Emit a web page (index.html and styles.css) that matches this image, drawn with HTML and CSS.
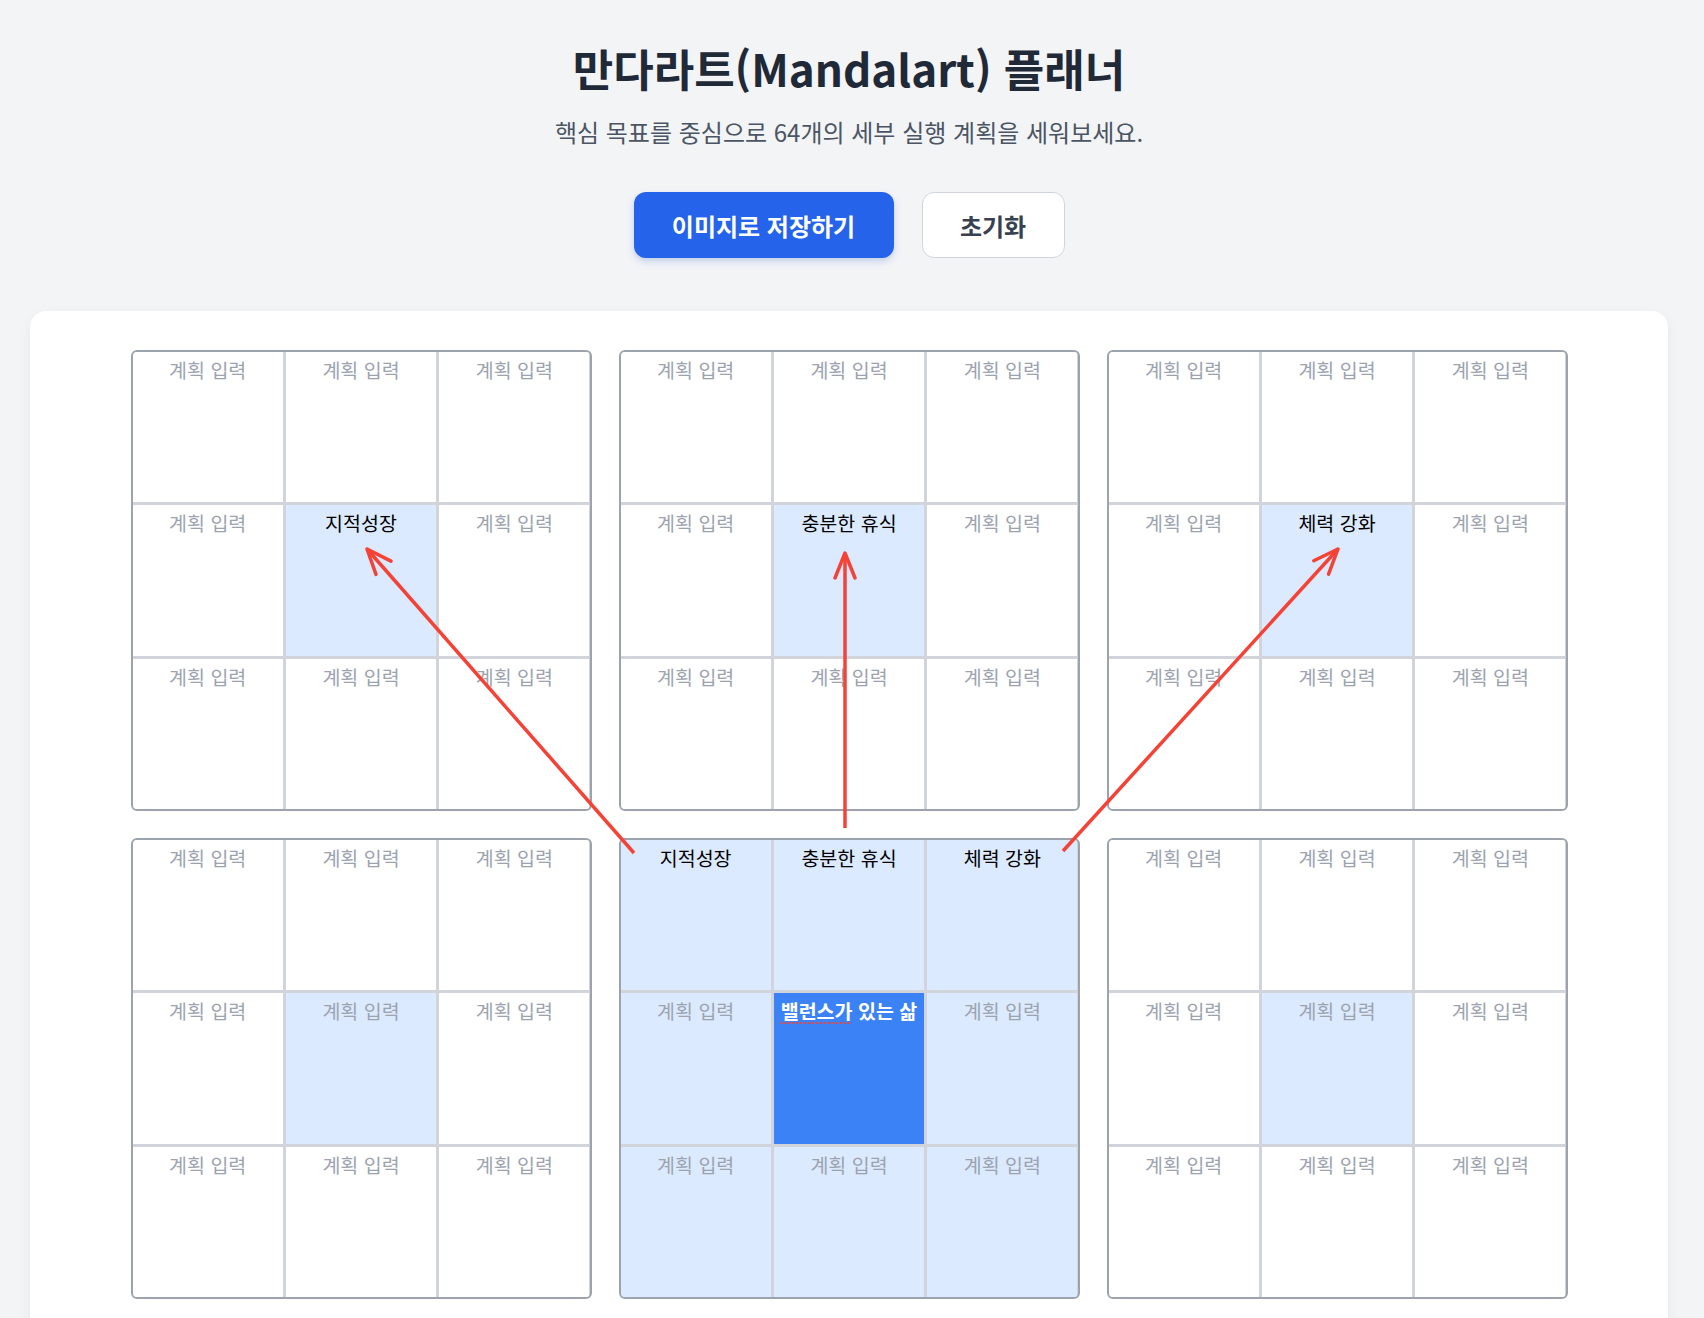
FILE: index.html
```html
<!DOCTYPE html>
<html lang="ko">
<head>
<meta charset="utf-8">
<title>만다라트(Mandalart) 플래너</title>
<link rel="stylesheet" href="styles.css">
</head>
<body>
<main class="page">
  <header class="header">
    <h1 class="title">만다라트(Mandalart) 플래너</h1>
    <p class="subtitle">핵심 목표를 중심으로 64개의 세부 실행 계획을 세워보세요.</p>
    <div class="actions">
      <button class="btn btn-primary" type="button">이미지로 저장하기</button>
      <button class="btn btn-secondary" type="button">초기화</button>
    </div>
  </header>

  <section class="card">
    <div class="board">
      <!-- Row 1 -->
      <div class="block">
        <div class="cell">계획 입력</div><div class="cell">계획 입력</div><div class="cell">계획 입력</div>
        <div class="cell">계획 입력</div><div class="cell cell-goal filled">지적성장</div><div class="cell">계획 입력</div>
        <div class="cell">계획 입력</div><div class="cell">계획 입력</div><div class="cell">계획 입력</div>
      </div>
      <div class="block">
        <div class="cell">계획 입력</div><div class="cell">계획 입력</div><div class="cell">계획 입력</div>
        <div class="cell">계획 입력</div><div class="cell cell-goal filled">충분한 휴식</div><div class="cell">계획 입력</div>
        <div class="cell">계획 입력</div><div class="cell">계획 입력</div><div class="cell">계획 입력</div>
      </div>
      <div class="block">
        <div class="cell">계획 입력</div><div class="cell">계획 입력</div><div class="cell">계획 입력</div>
        <div class="cell">계획 입력</div><div class="cell cell-goal filled">체력 강화</div><div class="cell">계획 입력</div>
        <div class="cell">계획 입력</div><div class="cell">계획 입력</div><div class="cell">계획 입력</div>
      </div>

      <!-- Row 2 -->
      <div class="block">
        <div class="cell">계획 입력</div><div class="cell">계획 입력</div><div class="cell">계획 입력</div>
        <div class="cell">계획 입력</div><div class="cell cell-goal">계획 입력</div><div class="cell">계획 입력</div>
        <div class="cell">계획 입력</div><div class="cell">계획 입력</div><div class="cell">계획 입력</div>
      </div>
      <div class="block block-center">
        <div class="cell cell-goal filled">지적성장</div><div class="cell cell-goal filled">충분한 휴식</div><div class="cell cell-goal filled">체력 강화</div>
        <div class="cell cell-goal">계획 입력</div><div class="cell cell-core"><span class="typo">밸런스가</span> 있는 삶</div><div class="cell cell-goal">계획 입력</div>
        <div class="cell cell-goal">계획 입력</div><div class="cell cell-goal">계획 입력</div><div class="cell cell-goal">계획 입력</div>
      </div>
      <div class="block">
        <div class="cell">계획 입력</div><div class="cell">계획 입력</div><div class="cell">계획 입력</div>
        <div class="cell">계획 입력</div><div class="cell cell-goal">계획 입력</div><div class="cell">계획 입력</div>
        <div class="cell">계획 입력</div><div class="cell">계획 입력</div><div class="cell">계획 입력</div>
      </div>

      <!-- Row 3 -->
      <div class="block">
        <div class="cell">계획 입력</div><div class="cell">계획 입력</div><div class="cell">계획 입력</div>
        <div class="cell">계획 입력</div><div class="cell cell-goal">계획 입력</div><div class="cell">계획 입력</div>
        <div class="cell">계획 입력</div><div class="cell">계획 입력</div><div class="cell">계획 입력</div>
      </div>
      <div class="block">
        <div class="cell">계획 입력</div><div class="cell">계획 입력</div><div class="cell">계획 입력</div>
        <div class="cell">계획 입력</div><div class="cell cell-goal">계획 입력</div><div class="cell">계획 입력</div>
        <div class="cell">계획 입력</div><div class="cell">계획 입력</div><div class="cell">계획 입력</div>
      </div>
      <div class="block">
        <div class="cell">계획 입력</div><div class="cell">계획 입력</div><div class="cell">계획 입력</div>
        <div class="cell">계획 입력</div><div class="cell cell-goal">계획 입력</div><div class="cell">계획 입력</div>
        <div class="cell">계획 입력</div><div class="cell">계획 입력</div><div class="cell">계획 입력</div>
      </div>

      <svg class="arrows" viewBox="0 0 1437 1437" width="1437" height="1437" aria-hidden="true">
        <defs>
          <marker id="head" viewBox="0 0 30 24" markerWidth="30" markerHeight="24" refX="27" refY="12" markerUnits="userSpaceOnUse" orient="auto">
            <path d="M2 2 L27 12 L2 22" fill="none" stroke="#f44336" stroke-width="3.5" stroke-linecap="round" stroke-linejoin="round"/>
          </marker>
        </defs>
        <line x1="503" y1="503" x2="236" y2="199" stroke="#f44336" stroke-width="3.5" marker-end="url(#head)"/>
        <line x1="714" y1="478" x2="714" y2="203" stroke="#f44336" stroke-width="3.5" marker-end="url(#head)"/>
        <line x1="932" y1="501" x2="1207" y2="199" stroke="#f44336" stroke-width="3.5" marker-end="url(#head)"/>
      </svg>
    </div>
  </section>
</main>
</body>
</html>
```

FILE: styles.css
```css
* {
  box-sizing: border-box;
}

body {
  margin: 0;
  background: #f3f4f6;
  font-family: "Noto Sans CJK KR", "Noto Sans", sans-serif;
  color: #1f2937;
}

.page {
  width: 1638px;
  margin-left: 30px;
  padding-top: 38px;
}

.header {
  text-align: center;
}

.title {
  margin: 0;
  font-size: 44px;
  line-height: 60px;
  font-weight: 700;
  color: #1f2937;
}

.subtitle {
  margin: 18px 0 0;
  font-size: 24px;
  line-height: 32px;
  font-weight: 400;
  color: #4b5563;
}

.actions {
  display: flex;
  justify-content: center;
  gap: 28px;
  margin-top: 44px;
}

.btn {
  height: 66px;
  border-radius: 12px;
  font-family: inherit;
  font-size: 24px;
  font-weight: 700;
  cursor: pointer;
}

.btn-primary {
  width: 260px;
  background: #2563eb;
  color: #ffffff;
  border: none;
  box-shadow: 0 4px 8px rgba(37, 99, 235, 0.18), 0 2px 4px rgba(0, 0, 0, 0.06);
}

.btn-secondary {
  width: 143px;
  background: #ffffff;
  color: #374151;
  border: 1px solid #d1d5db;
}

.card {
  margin-top: 53px;
  background: #ffffff;
  border-radius: 16px;
  box-shadow: 0 4px 14px rgba(0, 0, 0, 0.05);
  padding: 39px 0 40px;
}

.board {
  position: relative;
  display: grid;
  grid-template-columns: repeat(3, 461px);
  grid-auto-rows: 461px;
  column-gap: 27px;
  row-gap: 27px;
  width: max-content;
  margin: 0 auto;
}

.block {
  display: grid;
  grid-template-columns: repeat(3, 1fr);
  grid-template-rows: repeat(3, 1fr);
  gap: 3px;
  background: #d1d5db;
  border: 2px solid #9ca3af;
  border-radius: 6px;
  overflow: hidden;
}

.cell {
  background: #ffffff;
  padding: 4px 2px;
  text-align: center;
  font-size: 19.5px;
  line-height: 27px;
  color: #9ca3af;
}

.cell-goal {
  background: #dbeafe;
}

.filled {
  color: #000000;
}

.cell-core {
  background: #3b82f6;
  color: #ffffff;
  font-weight: 700;
}

.typo {
  text-decoration: underline dotted #f44336;
  text-decoration-thickness: 2px;
  text-underline-offset: 3px;
}

.arrows {
  position: absolute;
  left: 0;
  top: 0;
  overflow: visible;
  pointer-events: none;
}
```
